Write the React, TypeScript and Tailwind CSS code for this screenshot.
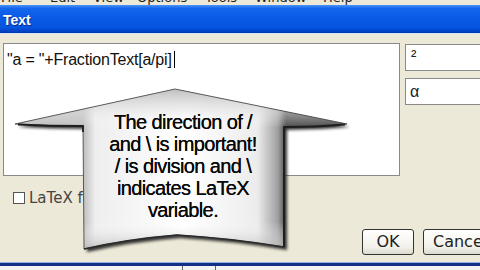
import React from "react";

const menuItems: { label: string; w: string }[] = [
  { label: "File", w: "w-[49px]" },
  { label: "Edit", w: "w-[43px]" },
  { label: "View", w: "w-[44px]" },
  { label: "Options", w: "w-[68px]" },
  { label: "Tools", w: "w-[50px]" },
  { label: "Window", w: "w-[68px]" },
  { label: "Help", w: "w-[60px]" },
];

const calloutLines = [
  "The direction of /",
  "and \\ is important!",
  "/ is division and \\",
  "indicates LaTeX",
  "variable.",
];

const Callout: React.FC = () => {
  const shape =
    "M175,89 L347,124 Q316,127 284,127 L284,247 Q228,238 177,235 Q128,239 84,249 L83,126 Q50,126 15,124 Z";
  return (
    <>
      <svg
        className="absolute left-0 top-0 pointer-events-none"
        width={480}
        height={270}
        viewBox="0 0 480 270"
      >
        <defs>
          <filter id="blur" x="-10%" y="-10%" width="120%" height="120%">
            <feGaussianBlur stdDeviation="1.6" />
          </filter>
          <linearGradient id="bodyGrad" x1="83" y1="0" x2="286" y2="0" gradientUnits="userSpaceOnUse">
            <stop offset="0" stopColor="#bcbcbc" />
            <stop offset="0.06" stopColor="#eeeeee" />
            <stop offset="0.5" stopColor="#ffffff" />
            <stop offset="0.86" stopColor="#ececec" />
            <stop offset="0.96" stopColor="#a0a0a0" />
            <stop offset="1" stopColor="#4a4a4a" />
          </linearGradient>
          <linearGradient id="headGrad" x1="0" y1="89" x2="0" y2="128" gradientUnits="userSpaceOnUse">
            <stop offset="0" stopColor="#b8b8b8" stopOpacity="0.9" />
            <stop offset="0.6" stopColor="#e6e6e6" stopOpacity="0.5" />
            <stop offset="1" stopColor="#ffffff" stopOpacity="0" />
          </linearGradient>
          <linearGradient id="bottomGrad" x1="0" y1="222" x2="0" y2="250" gradientUnits="userSpaceOnUse">
            <stop offset="0" stopColor="#ffffff" stopOpacity="0" />
            <stop offset="1" stopColor="#b5b5b5" stopOpacity="0.85" />
          </linearGradient>
        </defs>
        <path d={shape} transform="translate(3,3)" fill="#1e1e1e" opacity="0.9" filter="url(#blur)" />
        <path d={shape} fill="url(#bodyGrad)" />
        <path d="M175,89 L347,124 Q316,127 284,127 L83,127 Q50,126 15,124 Z" fill="url(#headGrad)" />
        <path d="M84,222 L284,222 L284,247 Q228,238 177,235 Q128,239 84,249 Z" fill="url(#bottomGrad)" />
        <path d={shape} fill="none" stroke="#4a4a4a" strokeWidth="0.9" />
        <path d="M18,124.5 Q50,126 83,126 L83,132" fill="none" stroke="#1e1e1e" strokeWidth="1.8" />
        <path d="M345,124.5 Q316,127 284,127 L284,247" fill="none" stroke="#1e1e1e" strokeWidth="2" />
        <path d="M84,249 Q128,239 177,235 Q228,238 284,247" fill="none" stroke="#2a2a2a" strokeWidth="1.4" />
      </svg>
      <div className="absolute left-[82px] top-[111px] w-[202px] text-center text-[20px] leading-[22px] tracking-[-0.6px] text-[#0a0a0a] font-['Liberation_Sans',Arial,sans-serif] [text-shadow:0_0_0.4px_#000]">
        {calloutLines.map((l) => (
          <div key={l}>{l}</div>
        ))}
      </div>
    </>
  );
};

const App: React.FC = () => {
  return (
    <div className="relative w-[480px] h-[270px] overflow-hidden bg-[#ece9d8] flex flex-col font-['DejaVu_Sans',sans-serif]">
      {/* menu bar, mostly scrolled off the top */}
      <div className="h-[5px] overflow-hidden bg-[#ece9d8]">
        <div className="-mt-[10px] flex pl-[1px] text-[13px] leading-[15px] text-[#222]">
          {menuItems.map((m) => (
            <span key={m.label} className={m.w}>
              {m.label}
            </span>
          ))}
        </div>
      </div>

      {/* title bar */}
      <div className="h-[28px] flex items-center pl-[3px] pt-[3px] bg-[linear-gradient(to_bottom,#4a93f8_0%,#1466ec_12%,#0a5ae6_45%,#0654e0_80%,#0043c4_94%,#0036a6_100%)]">
        <span className="text-white font-bold text-[14px] font-['Liberation_Sans',Arial,sans-serif] [text-shadow:1px_1px_0_#0a2a8a]">
          Text
        </span>
      </div>

      {/* body */}
      <div className="flex-1 flex flex-col border-t border-[#d8e4f8]">
        <div className="flex pt-[9px] pl-[3px] gap-[5px]">
          <div className="w-[397px] h-[133px] bg-white border border-[#8a8a8a] pl-[3px] pt-[4px]">
            <span className="text-[16px] leading-[18px] text-[#111] font-['Liberation_Sans',Arial,sans-serif] tracking-[-0.2px]">
              "a = "+FractionText[a/pi]
            </span>
            <span className="inline-block w-[1px] h-[17px] bg-black align-[-3px] ml-[2px]" />
          </div>
          <div className="flex flex-col gap-[7px] pt-[1px] flex-1">
            <div className="h-[27px] bg-white border border-[#8a8a8a] border-r-0 pl-[5px] text-[16px] leading-[22px] text-[#222] font-['Liberation_Sans',Arial,sans-serif]">
              ²
            </div>
            <div className="h-[27px] bg-white border border-[#8a8a8a] border-r-0 pl-[4px] text-[16px] leading-[26px] text-[#222] font-['Liberation_Sans',Arial,sans-serif]">
              α
            </div>
          </div>
        </div>

        <div className="flex items-center mt-[14px] pl-[13px] gap-[4px]">
          <div className="w-[12px] h-[12px] bg-white border border-[#555]" />
          <span className="text-[15px] leading-[16px] text-[#444]">LaTeX formula</span>
        </div>

        <div className="flex mt-[23px] pl-[362px] gap-[9px]">
          <button className="w-[52px] h-[26px] shrink-0 rounded-[3px] border border-[#333] bg-[linear-gradient(to_bottom,#ffffff,#f2f1ea_70%,#dcdad0)] text-[16px] leading-[24px] text-[#222]">
            OK
          </button>
          <button className="w-[70px] h-[26px] shrink-0 rounded-[3px] border border-[#333] bg-[linear-gradient(to_bottom,#ffffff,#f2f1ea_70%,#dcdad0)] text-[16px] leading-[24px] text-[#222] text-left pl-[9px]">
            Cancel
          </button>
        </div>

        <div className="mt-auto h-[8px] flex flex-col">
          <div className="h-[1px] bg-[#8fb0e8]" />
          <div className="h-[3px] bg-[#132f86]" />
          <div className="flex-1 flex bg-[#f4f4f4]">
            <div className="w-[183px] border-r border-[#666]" />
            <div className="w-[33px] border-r border-[#666]" />
          </div>
        </div>
      </div>

      <Callout />
    </div>
  );
};

export default App;
